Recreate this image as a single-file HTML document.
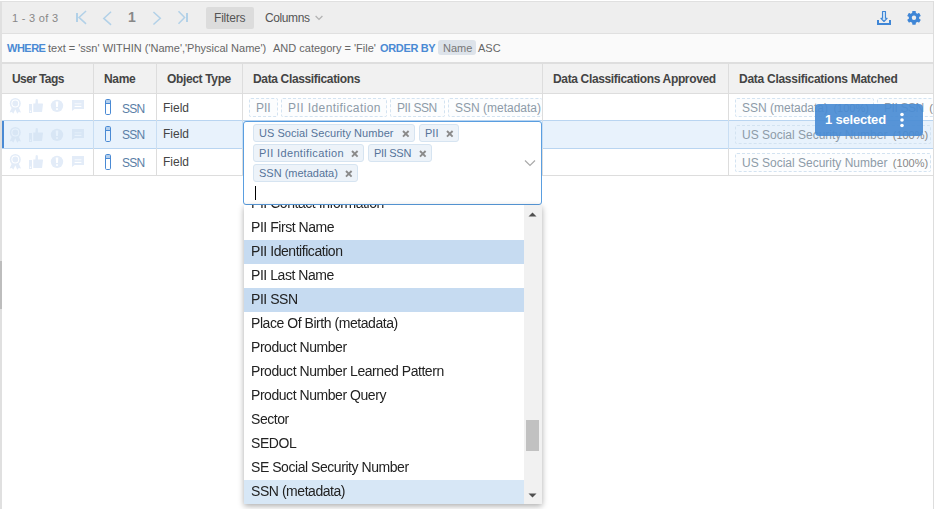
<!DOCTYPE html>
<html><head><meta charset="utf-8">
<style>
*{box-sizing:border-box;margin:0;padding:0}
html,body{width:934px;height:509px;overflow:hidden;background:#fff;font-family:"Liberation Sans",sans-serif;position:relative}
#list{will-change:transform}
.a{position:absolute}
.t{position:absolute;white-space:nowrap;line-height:1}
.vd{position:absolute;width:1px;background:#ddd}
.hd{position:absolute;white-space:nowrap;line-height:1;font-weight:bold;font-size:12px;color:#444;letter-spacing:-0.35px}
.tag{position:absolute;border:1px dashed #d3e3f1;border-radius:2px;font-size:12px;color:#8d9ba8;height:19px;line-height:17px;padding:1px 0 0 6px;white-space:nowrap;overflow:hidden;background:#fcfdfe}
.tag i{font-style:normal;font-size:11px;color:#888;margin-left:2px}
.chip{position:absolute;background:#edf3f9;border:1px solid #d6e4f1;border-radius:3px;height:18px;line-height:16px;font-size:11px;color:#56749a;padding:0 0 0 5px;white-space:nowrap}
.chip svg{position:absolute;top:4.6px}
.opt{position:absolute;left:0;width:280px;height:24px;font-size:14px;letter-spacing:-0.45px;color:#222;line-height:23px;padding-left:7px;white-space:nowrap}
</style></head><body>

<div class="a" style="left:0;top:1px;width:934px;height:1px;background:#e0e0e0"></div>
<div class="a" style="left:2px;top:2px;width:931px;height:31px;background:#eee"></div>
<div class="a" style="left:2px;top:33px;width:931px;height:1px;background:#e0e0e0"></div>
<div class="a" style="left:2px;top:34px;width:931px;height:28px;background:#fafafa"></div>
<div class="a" style="left:2px;top:62px;width:931px;height:2px;background:#dedede"></div>
<div class="a" style="left:2px;top:64px;width:931px;height:29px;background:#f1f1f1"></div>
<div class="a" style="left:2px;top:93px;width:932px;height:1px;background:#ddd"></div>
<div class="a" style="left:0;top:1px;width:2px;height:508px;background:#e0e0e0"></div>
<div class="a" style="left:0;top:261px;width:2px;height:48px;background:#bdbdbd"></div>
<div class="t" style="left:12px;top:13px;font-size:11px;letter-spacing:0.3px;color:#888">1 - 3 of 3</div>
<svg class="a" style="left:0;top:0" width="200" height="30" viewBox="0 0 200 30"><g fill="none" stroke="#b2d1e8" stroke-width="1.5" stroke-linecap="square">
<path d="M85.5 11.5L79 17.4l6.5 6M110.5 12.2L103.8 18.4l6.7 6M154 12.5L160.3 18.2l-6.3 5.8M179 11.7L184.6 17.4l-5.6 5.8"/></g>
<g fill="#b2d1e8"><rect x="76" y="13" width="2" height="9"/><rect x="186" y="13" width="2" height="9"/></g></svg>
<div class="t" style="left:128px;top:10px;font-size:14px;font-weight:bold;color:#888">1</div>
<div class="a" style="left:206px;top:7px;width:48px;height:22px;background:#dcdcdc;border-radius:2px"></div>
<div class="t" style="left:214px;top:12px;font-size:12px;color:#555;letter-spacing:-0.2px">Filters</div>
<div class="t" style="left:265px;top:12px;font-size:12px;color:#555;letter-spacing:-0.4px">Columns</div>
<svg class="a" style="left:315px;top:15px" width="8" height="6" viewBox="0 0 8 6"><path d="M0.6 1l3.4 3.4 3.4-3.4" fill="none" stroke="#b3b3b3" stroke-width="1.3"/></svg>
<svg class="a" style="left:870px;top:5px" width="60" height="25" viewBox="870 5 60 25">
<path d="M882.5 11.5h3v6.8h1.6l-3.1 3.2-3.1-3.2h1.6z" fill="#cfe4f7" stroke="#3f86d6" stroke-width="1.1" stroke-linejoin="round"/>
<path d="M878 20v3.9h12V20" fill="none" stroke="#3f86d6" stroke-width="2"/>
<g transform="translate(914,17.8)" fill="#3f86d6">
<circle r="5.2"/>
<rect x="-1.8" y="-6.9" width="3.6" height="2.8" rx="0.6"/>
<rect x="-1.8" y="-6.9" width="3.6" height="2.8" rx="0.6" transform="rotate(60)"/>
<rect x="-1.8" y="-6.9" width="3.6" height="2.8" rx="0.6" transform="rotate(120)"/>
<rect x="-1.8" y="-6.9" width="3.6" height="2.8" rx="0.6" transform="rotate(180)"/>
<rect x="-1.8" y="-6.9" width="3.6" height="2.8" rx="0.6" transform="rotate(240)"/>
<rect x="-1.8" y="-6.9" width="3.6" height="2.8" rx="0.6" transform="rotate(300)"/>
<circle r="2.2" fill="#eee"/>
</g></svg>
<div class="t" style="left:7px;top:43px;font-size:11px;color:#666;color:#4a8ad4;font-weight:bold;letter-spacing:-0.5px">WHERE</div>
<div class="t" style="left:48px;top:43px;font-size:11px;color:#666">text = 'ssn' WITHIN ('Name',</div>
<div class="t" style="left:185px;top:43px;font-size:11px;color:#666">'Physical Name')</div>
<div class="t" style="left:273px;top:43px;font-size:11px;color:#666">AND category = 'File'</div>
<div class="t" style="left:380px;top:43px;font-size:11px;color:#666;color:#4a8ad4;font-weight:bold;letter-spacing:-0.35px">ORDER BY</div>
<div class="a" style="left:438px;top:40px;width:38px;height:15px;background:#dde3ea;border-radius:3px"></div>
<div class="t" style="left:443px;top:43px;font-size:11px;color:#666;color:#777">Name</div>
<div class="t" style="left:478px;top:43px;font-size:11px;color:#666">ASC</div>
<div class="hd" style="left:12px;top:73px;letter-spacing:-0.6px">User Tags</div>
<div class="hd" style="left:104px;top:73px;letter-spacing:-0.35px">Name</div>
<div class="hd" style="left:167px;top:73px;letter-spacing:-0.35px">Object Type</div>
<div class="hd" style="left:253px;top:73px;letter-spacing:-0.35px">Data Classifications</div>
<div class="hd" style="left:553px;top:73px;letter-spacing:-0.35px">Data Classifications Approved</div>
<div class="hd" style="left:739px;top:73px;letter-spacing:-0.27px">Data Classifications Matched</div>
<div class="a" style="left:2px;top:120px;width:932px;height:29px;background:#e8f2fc;border-top:1px solid #b9d5f1;border-bottom:1px solid #b9d5f1"></div>
<div class="a" style="left:2px;top:121px;width:2px;height:27px;background:#4a8ad4"></div>
<div class="a" style="left:2px;top:175px;width:932px;height:1px;background:#ddd"></div>
<div class="vd" style="left:93px;top:64px;height:112px"></div>
<div class="vd" style="left:93px;top:121px;height:27px;background:#c9def3"></div>
<div class="vd" style="left:156px;top:64px;height:112px"></div>
<div class="vd" style="left:156px;top:121px;height:27px;background:#c9def3"></div>
<div class="vd" style="left:242px;top:64px;height:112px"></div>
<div class="vd" style="left:242px;top:121px;height:27px;background:#c9def3"></div>
<div class="vd" style="left:542px;top:64px;height:112px"></div>
<div class="vd" style="left:542px;top:121px;height:27px;background:#c9def3"></div>
<div class="vd" style="left:728px;top:64px;height:112px"></div>
<div class="vd" style="left:728px;top:121px;height:27px;background:#c9def3"></div>
<svg class="a" style="left:9px;top:98px" width="76" height="16" viewBox="0 0 76 16">
<g fill="#e3ecf8">
<circle cx="6.3" cy="5.5" r="5.5"/><path d="M3.3 8.5L0.6 14.6l2.3-.6 1.4 1.7 2.3-5zM9.3 8.5L12 14.6l-2.3-.6-1.4 1.7-2.3-5z"/>
<rect x="20" y="6" width="3" height="9"/>
<path d="M24.3 5.6H26.4L26.7 1.4Q26.8 1 27.6 1 28.9 1 28.9 2.4V5.6H33.4Q34.1 5.6 34 6.3L33.1 13.5Q33 14 32.3 14H24.3Z"/>
<circle cx="48" cy="7.85" r="6.2"/>
<path d="M63 2.1h12v9H65.6L63 13z"/>
</g>
<g fill="#fff"><circle cx="6.3" cy="5.5" r="3.9"/><path d="M46.7 3.6h2.6l-.4 5.5h-1.8z"/><rect x="47.1" y="10.2" width="1.8" height="1.7"/><rect x="65.6" y="5.1" width="6.8" height="1.3" opacity=".6"/><rect x="65.6" y="7.9" width="6.8" height="1.1"/><circle cx="21.5" cy="13.2" r=".7"/></g>
<circle cx="6.3" cy="5.5" r="2.9" fill="#e3ecf8"/>
</svg>
<svg class="a" style="left:105px;top:99px" width="6" height="16" viewBox="0 0 6 16"><rect x="1" y="1" width="4" height="3" fill="#b3cfee"/><rect x="0.5" y="0.5" width="5" height="15" rx="1.2" fill="none" stroke="#4a8ad4" stroke-width="1"/><path d="M0.5 4.5h5" stroke="#4a8ad4" stroke-width="1"/></svg>
<div class="t" style="left:122px;top:103px;font-size:12px;color:#5a7ea6;letter-spacing:-0.7px">SSN</div>
<div class="t" style="left:163px;top:102px;font-size:12px;color:#444">Field</div>
<svg class="a" style="left:9px;top:127px" width="76" height="16" viewBox="0 0 76 16">
<g fill="#d8e6f5">
<circle cx="6.3" cy="5.5" r="5.5"/><path d="M3.3 8.5L0.6 14.6l2.3-.6 1.4 1.7 2.3-5zM9.3 8.5L12 14.6l-2.3-.6-1.4 1.7-2.3-5z"/>
<rect x="20" y="6" width="3" height="9"/>
<path d="M24.3 5.6H26.4L26.7 1.4Q26.8 1 27.6 1 28.9 1 28.9 2.4V5.6H33.4Q34.1 5.6 34 6.3L33.1 13.5Q33 14 32.3 14H24.3Z"/>
<circle cx="48" cy="7.85" r="6.2"/>
<path d="M63 2.1h12v9H65.6L63 13z"/>
</g>
<g fill="#e8f2fc"><circle cx="6.3" cy="5.5" r="3.9"/><path d="M46.7 3.6h2.6l-.4 5.5h-1.8z"/><rect x="47.1" y="10.2" width="1.8" height="1.7"/><rect x="65.6" y="5.1" width="6.8" height="1.3" opacity=".6"/><rect x="65.6" y="7.9" width="6.8" height="1.1"/><circle cx="21.5" cy="13.2" r=".7"/></g>
<circle cx="6.3" cy="5.5" r="2.9" fill="#d8e6f5"/>
</svg>
<svg class="a" style="left:105px;top:126px" width="6" height="16" viewBox="0 0 6 16"><rect x="1" y="1" width="4" height="3" fill="#b3cfee"/><rect x="0.5" y="0.5" width="5" height="15" rx="1.2" fill="none" stroke="#4a8ad4" stroke-width="1"/><path d="M0.5 4.5h5" stroke="#4a8ad4" stroke-width="1"/></svg>
<div class="t" style="left:122px;top:129px;font-size:12px;color:#5a7ea6;letter-spacing:-0.7px">SSN</div>
<div class="t" style="left:163px;top:128px;font-size:12px;color:#444">Field</div>
<svg class="a" style="left:9px;top:154px" width="76" height="16" viewBox="0 0 76 16">
<g fill="#e3ecf8">
<circle cx="6.3" cy="5.5" r="5.5"/><path d="M3.3 8.5L0.6 14.6l2.3-.6 1.4 1.7 2.3-5zM9.3 8.5L12 14.6l-2.3-.6-1.4 1.7-2.3-5z"/>
<rect x="20" y="6" width="3" height="9"/>
<path d="M24.3 5.6H26.4L26.7 1.4Q26.8 1 27.6 1 28.9 1 28.9 2.4V5.6H33.4Q34.1 5.6 34 6.3L33.1 13.5Q33 14 32.3 14H24.3Z"/>
<circle cx="48" cy="7.85" r="6.2"/>
<path d="M63 2.1h12v9H65.6L63 13z"/>
</g>
<g fill="#fff"><circle cx="6.3" cy="5.5" r="3.9"/><path d="M46.7 3.6h2.6l-.4 5.5h-1.8z"/><rect x="47.1" y="10.2" width="1.8" height="1.7"/><rect x="65.6" y="5.1" width="6.8" height="1.3" opacity=".6"/><rect x="65.6" y="7.9" width="6.8" height="1.1"/><circle cx="21.5" cy="13.2" r=".7"/></g>
<circle cx="6.3" cy="5.5" r="2.9" fill="#e3ecf8"/>
</svg>
<svg class="a" style="left:105px;top:154px" width="6" height="16" viewBox="0 0 6 16"><rect x="1" y="1" width="4" height="3" fill="#b3cfee"/><rect x="0.5" y="0.5" width="5" height="15" rx="1.2" fill="none" stroke="#4a8ad4" stroke-width="1"/><path d="M0.5 4.5h5" stroke="#4a8ad4" stroke-width="1"/></svg>
<div class="t" style="left:122px;top:157px;font-size:12px;color:#5a7ea6;letter-spacing:-0.7px">SSN</div>
<div class="t" style="left:163px;top:156px;font-size:12px;color:#444">Field</div>
<div class="tag" style="left:249px;top:98px;width:29px">PII</div>
<div class="tag" style="left:281px;top:98px;width:106px;letter-spacing:0.42px">PII Identification</div>
<div class="tag" style="left:390px;top:98px;width:55px;letter-spacing:-0.4px">PII SSN</div>
<div class="tag" style="left:448px;top:98px;width:94px;border-right:none">SSN (metadata)</div>
<div class="tag" style="left:735px;top:98px;width:139px">SSN (metadata) <i>(100%)</i></div>
<div class="tag" style="left:877px;top:98px;width:70px"><span style="letter-spacing:-0.4px">PII SSN</span> <i>(100%)</i></div>
<div class="tag" style="left:735px;top:125px;width:196px;background:transparent">US Social Security Number <i>(100%)</i></div>
<div class="tag" style="left:735px;top:153px;width:196px">US Social Security Number <i>(100%)</i></div>
<div class="a" style="left:243px;top:121px;width:299px;height:84px;background:#fff;border:1px solid #5a9ee0;border-radius:3px"></div>
<div class="chip" style="left:253px;top:124px;width:162px;letter-spacing:0.05px">US Social Security Number<svg width="8" height="8" viewBox="0 0 8 8" style="left:148px"><path d="M1 1l5.6 5.6M6.6 1L1 6.6" stroke="#8a8a8a" stroke-width="1.9"/></svg></div>
<div class="chip" style="left:419px;top:124px;width:40px;letter-spacing:0px">PII<svg width="8" height="8" viewBox="0 0 8 8" style="left:26px"><path d="M1 1l5.6 5.6M6.6 1L1 6.6" stroke="#8a8a8a" stroke-width="1.9"/></svg></div>
<div class="chip" style="left:253px;top:144px;width:111px;letter-spacing:0.37px">PII Identification<svg width="8" height="8" viewBox="0 0 8 8" style="left:97px"><path d="M1 1l5.6 5.6M6.6 1L1 6.6" stroke="#8a8a8a" stroke-width="1.9"/></svg></div>
<div class="chip" style="left:368px;top:144px;width:64px;letter-spacing:-0.3px">PII SSN<svg width="8" height="8" viewBox="0 0 8 8" style="left:50px"><path d="M1 1l5.6 5.6M6.6 1L1 6.6" stroke="#8a8a8a" stroke-width="1.9"/></svg></div>
<div class="chip" style="left:253px;top:164px;width:105px;letter-spacing:0px">SSN (metadata)<svg width="8" height="8" viewBox="0 0 8 8" style="left:91px"><path d="M1 1l5.6 5.6M6.6 1L1 6.6" stroke="#8a8a8a" stroke-width="1.9"/></svg></div>
<div class="a" style="left:255px;top:186px;width:1px;height:14px;background:#000"></div>
<svg class="a" style="left:524px;top:159px" width="12" height="8" viewBox="0 0 12 8"><path d="M1 1.5l5 5 5-5" fill="none" stroke="#aaa" stroke-width="1.2"/></svg>
<div class="a" id="list" style="left:244px;top:205px;width:298px;height:299px;background:#fff;box-shadow:0 2px 6px rgba(0,0,0,.33);overflow:hidden">
<div class="opt" style="top:-13px;">PII Contact Information</div>
<div class="opt" style="top:11px;">PII First Name</div>
<div class="opt" style="top:35px;background:#c6dbf1;">PII Identification</div>
<div class="opt" style="top:59px;">PII Last Name</div>
<div class="opt" style="top:83px;background:#c6dbf1;">PII SSN</div>
<div class="opt" style="top:107px;">Place Of Birth (metadata)</div>
<div class="opt" style="top:131px;">Product Number</div>
<div class="opt" style="top:155px;">Product Number Learned Pattern</div>
<div class="opt" style="top:179px;">Product Number Query</div>
<div class="opt" style="top:203px;">Sector</div>
<div class="opt" style="top:227px;">SEDOL</div>
<div class="opt" style="top:251px;">SE Social Security Number</div>
<div class="opt" style="top:275px;background:#d7e7f6;">SSN (metadata)</div>
<div class="a" style="left:280px;top:0;width:18px;height:300px;background:#f1f1f1"></div>
<div class="a" style="left:282px;top:215px;width:13px;height:31px;background:#c1c1c1"></div>
<svg class="a" style="left:284px;top:7px" width="9" height="5" viewBox="0 0 9 5"><path d="M0.5 4.5L4.5 0.5 8.5 4.5z" fill="#505050"/></svg>
<svg class="a" style="left:284px;top:288px" width="9" height="5" viewBox="0 0 9 5"><path d="M0.5 0.5L4.5 4.5 8.5 0.5z" fill="#505050"/></svg>
</div>
<div class="a" style="left:815px;top:104px;width:108px;height:32px;background:rgba(74,140,212,.92);border-radius:4px"></div>
<div class="t" style="left:825px;top:113px;font-size:13px;font-weight:bold;color:#fff;letter-spacing:-0.2px">1 selected</div>
<svg class="a" style="left:899px;top:112px" width="6" height="16" viewBox="0 0 6 16"><circle cx="3" cy="2.5" r="1.8" fill="#fff"/><circle cx="3" cy="8" r="1.8" fill="#fff"/><circle cx="3" cy="13.5" r="1.8" fill="#fff"/></svg>
<div class="a" style="left:933px;top:1px;width:1px;height:508px;background:#ddd"></div>
</body></html>
